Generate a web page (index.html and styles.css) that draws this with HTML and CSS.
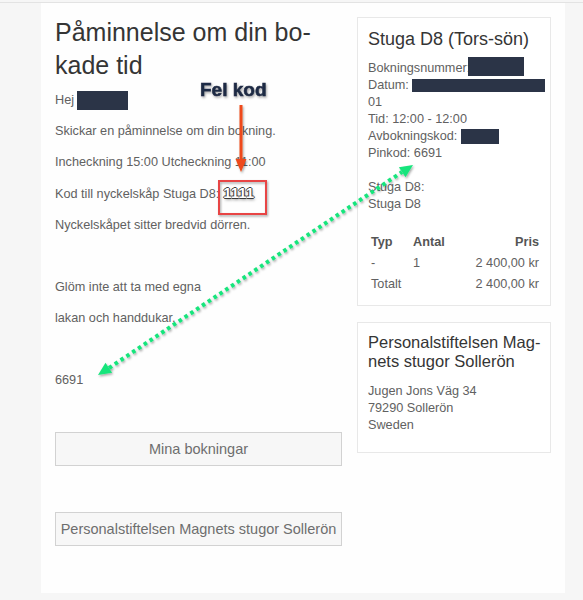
FILE: index.html
```html
<!DOCTYPE html>
<html lang="sv">
<head>
<meta charset="UTF-8">
<meta name="viewport" content="width=device-width, initial-scale=1.0">
<title>Påminnelse om din bokade tid</title>
<link rel="stylesheet" href="styles.css">
</head>
<body>
  <div class="page">
    <div class="panel">
      <div class="main">
        <h1 class="title">Påminnelse om din bo&shy;kade tid</h1>
        <p>Hej <span class="redact redact-name"></span></p>
        <p>Skickar en påminnelse om din bokning.</p>
        <p>Incheckning 15:00 Utcheckning 11:00</p>
        <p>Kod till nyckelskåp Stuga D8:<span class="code">1111</span></p>
        <p>Nyckelskåpet sitter bredvid dörren.</p>
        <p>&nbsp;</p>
        <p>Glöm inte att ta med egna</p>
        <p>lakan och handdukar.</p>
        <p>&nbsp;</p>
        <p>6691</p>

        <!-- links back to the booking site -->
        <a class="btn" href="#">Mina bokningar</a>
        <a class="btn" href="#">Personalstiftelsen Magnets stugor Sollerön</a>
      </div>

      <aside class="side">
        <div class="card">
          <h2 class="card-title">Stuga D8 (Tors-sön)</h2>
          <div class="details">
            Bokningsnummer:<span class="redact redact-num"></span><br>
            Datum: <span class="redact redact-date"></span><br>
            01<br>
            Tid: 12:00 - 12:00<br>
            Avbokningskod: <span class="redact redact-code"></span><br>
            Pinkod: 6691<br>
            <br>
            Stuga D8:<br>
            Stuga D8
          </div>
          <table class="price">
            <tr><th class="col-type">Typ</th><th>Antal</th><th class="num">Pris</th></tr>
            <tr><td>-</td><td>1</td><td class="num">2 400,00 kr</td></tr>
            <tr><td>Totalt</td><td></td><td class="num">2 400,00 kr</td></tr>
          </table>
        </div>

        <div class="card">
          <h2 class="card-title small">Personalstiftelsen Mag&shy;nets stugor Sollerön</h2>
          <div class="details address">
            Jugen Jons Väg 34<br>
            79290 Sollerön<br>
            Sweden
          </div>
        </div>
      </aside>
    </div>

    <!-- annotations drawn on top of the mail -->
    <svg class="marks" width="583" height="600" viewBox="0 0 583 600">
      <defs>
        <filter id="shadow" x="-20%" y="-20%" width="140%" height="140%">
          <feDropShadow dx="1" dy="1.5" stdDeviation="1.2" flood-color="#000" flood-opacity="0.35"/>
        </filter>
      </defs>
      <text class="note" x="200" y="93" filter="url(#shadow)">Fel kod</text>
      <g filter="url(#shadow)">
        <line x1="241" y1="102" x2="241" y2="158" stroke="#ee4a1a" stroke-width="3"/>
        <polygon points="235.5,156 246.5,156 241,169" fill="#ee4a1a"/>
      </g>
      <rect x="219" y="178" width="47" height="33" fill="none" stroke="#e84545" stroke-width="2" filter="url(#shadow)"/>
      <g filter="url(#shadow)">
        <line x1="109" y1="365" x2="402" y2="169" stroke="#17e57c" stroke-width="4" stroke-dasharray="3.5 3.5"/>
        <polygon points="413,162 405.5,174.2 398.9,164.2" fill="#17e57c"/>
        <polygon points="98,372 112.1,369.8 105.5,359.8" fill="#17e57c"/>
      </g>
    </svg>
  </div>
</body>
</html>
```

FILE: styles.css
```css
body {
  margin: 0;
  padding-top: 2px;
  background-color: #f6f6f6;
  font-family: "Liberation Sans", Arial, sans-serif;
  color: #616161;
}
.page {
  position: relative;
  height: 598px;
  border-top: 1px solid #e3e3e3;
}
.panel {
  display: flex;
  gap: 15px;
  width: 524px;
  margin-left: 41px;
  padding: 14px 14px 47px 14px;
  box-sizing: border-box;
  background-color: #fefefe;
}
.main {
  width: 287px;
  flex-shrink: 0;
}
.title {
  margin: -1px 0 9px 0;
  font-size: 25px;
  font-weight: normal;
  line-height: 33px;
  color: #353535;
}
.main p {
  margin: 0 0 13px 0;
  font-size: 12.7px;
  line-height: 18px;
}
.redact {
  display: inline-block;
  vertical-align: middle;
  background-color: #2b3447;
}
.redact-name {
  width: 51px;
  height: 19px;
  margin: -1px 0 -1px -1px;
}
.redact-num {
  width: 56px;
  height: 19px;
  margin: -3px 0 -1px -2px;
  vertical-align: -3px;
}
.redact-date {
  width: 133px;
  height: 13px;
}
.redact-code {
  width: 38px;
  height: 15px;
  margin: -1px 0;
}
.code {
  margin-left: 4px;
  font-size: 15px;
  font-weight: bold;
  color: #fff;
  text-shadow: -1px 0 #3a3a3a, 1px 0 #3a3a3a, 0 -1px #3a3a3a, 0 1px #3a3a3a, 1px 2px 3px rgba(0, 0, 0, 0.4);
}
.btn {
  display: block;
  height: 34px;
  margin-top: 43px;
  border: 1px solid #d2d2d2;
  box-sizing: border-box;
  background-color: #f7f7f7;
  font-size: 14.5px;
  line-height: 32px;
  text-align: center;
  color: #6e6e6e;
  text-decoration: none;
  white-space: nowrap;
}
.btn + .btn {
  margin-top: 46px;
}
.side {
  width: 194px;
  flex-shrink: 0;
}
.card {
  margin-bottom: 16px;
  padding: 10px 8px 10px 10px;
  border: 1px solid #e8e8e8;
  background-color: #fff;
}
.card-title {
  margin: 1px 0 9px 0;
  font-size: 18px;
  font-weight: normal;
  line-height: 1.2;
  color: #353535;
}
.card-title.small {
  margin: 0 0 11px 0;
  font-size: 16.5px;
}
.details {
  font-size: 12.7px;
  line-height: 17px;
  white-space: nowrap;
}
.address {
  margin-bottom: 8px;
}
.price {
  width: 100%;
  margin-top: 19px;
  border-collapse: collapse;
  font-size: 12.7px;
}
.price th,
.price td {
  height: 21px;
  padding: 0 3px;
  text-align: left;
}
.price th {
  color: #555;
}
.price .col-type {
  width: 36px;
}
.price .num {
  text-align: right;
}
.marks {
  position: absolute;
  top: 0;
  left: 0;
  pointer-events: none;
}
.note {
  font-family: "Liberation Sans", Arial, sans-serif;
  font-size: 19px;
  font-weight: bold;
  fill: #1f2a44;
  stroke: #1f2a44;
  stroke-width: 0.6px;
}
```
